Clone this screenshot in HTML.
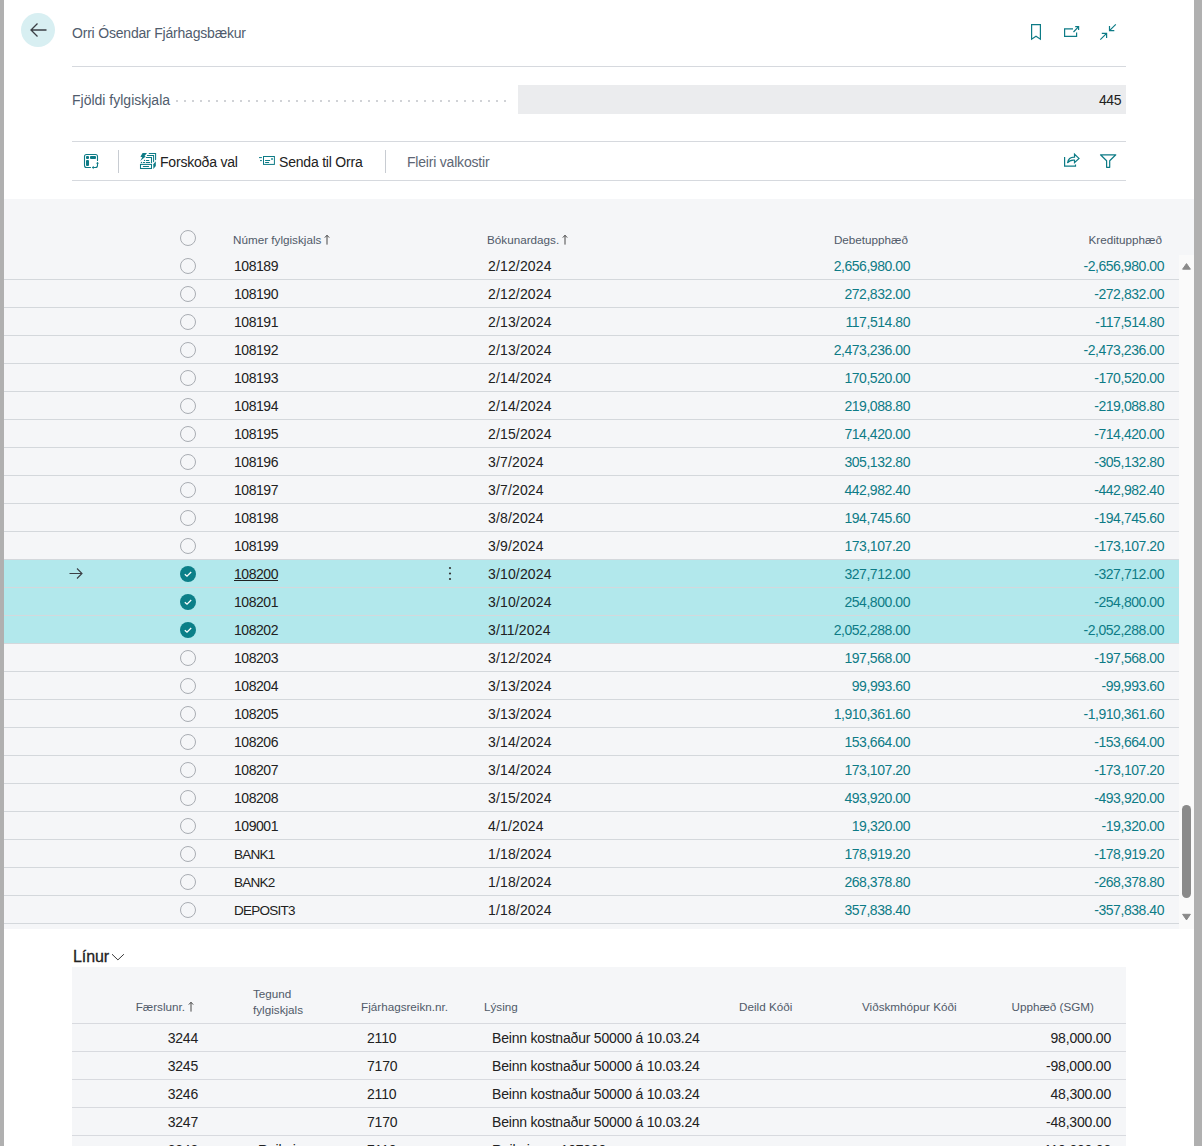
<!DOCTYPE html>
<html><head><meta charset="utf-8">
<style>
*{box-sizing:border-box;margin:0;padding:0}
html,body{width:1202px;height:1146px;overflow:hidden;background:#fff}
body{position:relative;font-family:"Liberation Sans",sans-serif;font-size:14px;letter-spacing:-0.2px;color:#212121}
.num{letter-spacing:-0.45px}
.date{letter-spacing:0.15px}
.code{font-size:13.5px;letter-spacing:-0.75px}
.abs{position:absolute}
.strip{position:absolute;top:0;bottom:0;background:#b0b0b0}
.t{position:absolute;white-space:nowrap;line-height:16px}
.hline{position:absolute;height:1px;background:#d6d9de}
.teal{color:#0d7b86}
.hdr{font-size:11.7px;letter-spacing:0;color:#505a69}
.grid{position:absolute;left:4px;top:199px;width:1190px;height:730px;background:#f5f6f8}
.row{position:absolute;left:0;width:1175px;height:28px}
.row .line{position:absolute;left:0;right:0;bottom:0;height:1px;background:#d8dadf}
.rad{position:absolute;width:16px;height:16px;border-radius:50%;border:1.3px solid #a9adb3}
.chk{position:absolute;width:16px;height:16px;border-radius:50%;background:#0b7f88}
.arr{display:inline-block;width:8px;height:11px;margin-left:2px;vertical-align:-1px}
</style></head><body>
<div class="strip" style="left:0;width:4px"></div>
<div class="strip" style="left:1194px;width:8px"></div>

<!-- header -->
<div class="abs" style="left:21px;top:13px;width:34px;height:34px;border-radius:50%;background:#d8eff2"></div>
<svg class="abs" style="left:21px;top:13px" width="34" height="34" viewBox="0 0 34 34"><path d="M10 17H25.5M16.5 10.5L10 17L16.5 23.5" fill="none" stroke="#3b3f45" stroke-width="1.3"/></svg>
<div class="t" style="left:72px;top:25px;color:#505c6d">Orri Ósendar Fjárhagsbækur</div>

<div class="hline" style="left:72px;top:66px;width:1054px"></div>
<div class="t" style="left:72px;top:92px;color:#505c6d;letter-spacing:0">Fjöldi fylgiskjala</div>
<div class="abs" style="left:176px;top:100px;width:330px;height:2px;background:repeating-linear-gradient(to right,#d0d2d6 0 2px,transparent 2px 8px)"></div>
<div class="abs" style="left:518px;top:85px;width:608px;height:29px;background:#ebecee"></div>
<div class="t num" style="left:1000px;width:121px;text-align:right;top:92px;color:#212121">445</div>

<div class="hline" style="left:72px;top:141px;width:1054px"></div>
<div class="hline" style="left:72px;top:180px;width:1054px"></div>


<!-- top right icons -->
<svg class="abs" style="left:1024px;top:16px" width="100" height="30" viewBox="1024 16 100 30">
<g fill="none" stroke="#0d7b86" stroke-width="1.2">
<path d="M1031.6 24.6H1040.4V39.2L1036 36.2L1031.6 39.2Z"/>
<path d="M1073 28.9H1064.6V36.3H1076.6V32.5"/>
<path d="M1073.5 32L1078.6 26.6M1075.2 26.6H1078.6V30"/>
<path d="M1100.3 39.6L1106.6 33.3M1101.8 33.3H1106.6V38.1"/>
<path d="M1115.8 24.4L1109.5 30.7M1109.5 25.9V30.7H1114.3"/>
</g></svg>

<!-- action bar -->
<svg class="abs" style="left:80px;top:148px" width="24" height="26" viewBox="80 148 24 26">
<g fill="none" stroke="#0d7b86" stroke-width="1.1" stroke-linecap="round">
<path d="M90.5 167.5H86.5Q84.5 167.5 84.5 165.5V156.5Q84.5 154.5 86.5 154.5H95.5Q97.5 154.5 97.5 156.5V160.5"/>
<path d="M97.5 163V165.5Q97.5 167.5 95.5 167.5H93"/>
</g>
<g fill="#0d7b86"><rect x="86" y="156" width="3" height="2.9" rx="0.9"/><rect x="90" y="156" width="6" height="2.9" rx="0.9"/><rect x="86" y="160" width="3" height="6" rx="0.9"/>
<path d="M95.9 163.6L97.5 161.9L99.1 163.6Z"/><path d="M93.6 165.8L91.9 167.5L93.6 169.2Z"/></g>
</svg>
<div class="abs" style="left:118px;top:150px;width:1px;height:23px;background:#c8ccd2"></div>
<svg class="abs" style="left:138px;top:151px" width="20" height="20" viewBox="138 151 20 20">
<g fill="none" stroke="#0d7b86" stroke-width="1.05" stroke-linecap="round">
<path d="M149.2 153.5H155.6V159.6"/><path d="M147.4 155.5H153.6V161.6"/><path d="M146.3 157.5H151.5V162.6"/>
<rect x="140.5" y="164.4" width="11" height="4.1"/>
<path d="M143.3 166.5H148.6M146.3 160.4H148.8M143.3 162.5H144.6M146.3 162.5H149.7"/>
</g>
<g fill="#0d7b86"><circle cx="144.5" cy="160.4" r="0.65"/><circle cx="141.4" cy="162.5" r="0.65"/>
<path d="M142.6 152.9L147 153.1L144.5 155.9L145.7 156.6L140.2 160.9L142.3 157.3L140.4 156.8Z"/>
<path d="M153.3 164.2L155.8 161.3V165.9L153.3 168.9Z"/></g>
</svg>
<div class="t" style="left:160px;top:154px">Forskoða val</div>
<svg class="abs" style="left:256px;top:152px" width="22" height="16" viewBox="256 152 22 16">
<g fill="none" stroke="#0d7b86" stroke-width="1" stroke-linecap="round"><rect x="263.5" y="156.5" width="10.9" height="7.9"/><path d="M265.5 160.5H269.7M265.5 162.5H268.7M259.4 157.6H261.5M260.4 160.6H261.5"/></g>
<rect x="271.2" y="158.2" width="1.6" height="1.6" fill="#0d7b86"/>
</svg>
<div class="t" style="left:279px;top:154px">Senda til Orra</div>
<div class="abs" style="left:385px;top:150px;width:1px;height:23px;background:#c8ccd2"></div>
<div class="t" style="left:407px;top:154px;color:#5d6674">Fleiri valkostir</div>
<svg class="abs" style="left:1060px;top:150px" width="64" height="22" viewBox="1060 150 64 22">
<g fill="none" stroke="#0d7b86" stroke-width="1.2">
<path d="M1064.6 157V166.2H1075.5V164.4"/>
<path d="M1067.5 163Q1068.5 157 1074.5 157.2V154.2L1079 158.4L1074.5 162.6V160.2Q1070 159.6 1067.5 163Z"/>
<path d="M1100.5 154.8H1115.8L1109.7 160.8V167.3H1106.6V160.8Z" stroke-linejoin="round"/>
</g></svg>

<div id="grid" class="grid"></div>


<div class="rad" style="left:180px;top:230px"></div>
<div class="t hdr" style="left:233px;top:232px">Númer fylgiskjals<svg class="arr" viewBox="0 0 8 11"><path d="M4 1.2V10.6M1.8 3.6L4 1.3L6.2 3.6" fill="none" stroke="#484848" stroke-width="1"/></svg></div>
<div class="t hdr" style="left:487px;top:232px">Bókunardags.<svg class="arr" viewBox="0 0 8 11"><path d="M4 1.2V10.6M1.8 3.6L4 1.3L6.2 3.6" fill="none" stroke="#484848" stroke-width="1"/></svg></div>
<div class="t hdr" style="left:700px;width:208px;text-align:right;top:232px">Debetupphæð</div>
<div class="t hdr" style="left:950px;width:212px;text-align:right;top:232px">Kreditupphæð</div>
<div class="abs" style="left:4px;top:279px;width:1175px;height:1px;background:#d4d8dc"></div>
<div class="rad" style="left:180px;top:258px"></div>
<div class="t num" style="left:234px;top:258px"><span>108189</span></div>
<div class="t date" style="left:488px;top:258px">2/12/2024</div>
<div class="t teal num" style="left:700px;width:210px;text-align:right;top:258px">2,656,980.00</div>
<div class="t teal num" style="left:950px;width:214px;text-align:right;top:258px">-2,656,980.00</div>
<div class="abs" style="left:4px;top:307px;width:1175px;height:1px;background:#d4d8dc"></div>
<div class="rad" style="left:180px;top:286px"></div>
<div class="t num" style="left:234px;top:286px"><span>108190</span></div>
<div class="t date" style="left:488px;top:286px">2/12/2024</div>
<div class="t teal num" style="left:700px;width:210px;text-align:right;top:286px">272,832.00</div>
<div class="t teal num" style="left:950px;width:214px;text-align:right;top:286px">-272,832.00</div>
<div class="abs" style="left:4px;top:335px;width:1175px;height:1px;background:#d4d8dc"></div>
<div class="rad" style="left:180px;top:314px"></div>
<div class="t num" style="left:234px;top:314px"><span>108191</span></div>
<div class="t date" style="left:488px;top:314px">2/13/2024</div>
<div class="t teal num" style="left:700px;width:210px;text-align:right;top:314px">117,514.80</div>
<div class="t teal num" style="left:950px;width:214px;text-align:right;top:314px">-117,514.80</div>
<div class="abs" style="left:4px;top:363px;width:1175px;height:1px;background:#d4d8dc"></div>
<div class="rad" style="left:180px;top:342px"></div>
<div class="t num" style="left:234px;top:342px"><span>108192</span></div>
<div class="t date" style="left:488px;top:342px">2/13/2024</div>
<div class="t teal num" style="left:700px;width:210px;text-align:right;top:342px">2,473,236.00</div>
<div class="t teal num" style="left:950px;width:214px;text-align:right;top:342px">-2,473,236.00</div>
<div class="abs" style="left:4px;top:391px;width:1175px;height:1px;background:#d4d8dc"></div>
<div class="rad" style="left:180px;top:370px"></div>
<div class="t num" style="left:234px;top:370px"><span>108193</span></div>
<div class="t date" style="left:488px;top:370px">2/14/2024</div>
<div class="t teal num" style="left:700px;width:210px;text-align:right;top:370px">170,520.00</div>
<div class="t teal num" style="left:950px;width:214px;text-align:right;top:370px">-170,520.00</div>
<div class="abs" style="left:4px;top:419px;width:1175px;height:1px;background:#d4d8dc"></div>
<div class="rad" style="left:180px;top:398px"></div>
<div class="t num" style="left:234px;top:398px"><span>108194</span></div>
<div class="t date" style="left:488px;top:398px">2/14/2024</div>
<div class="t teal num" style="left:700px;width:210px;text-align:right;top:398px">219,088.80</div>
<div class="t teal num" style="left:950px;width:214px;text-align:right;top:398px">-219,088.80</div>
<div class="abs" style="left:4px;top:447px;width:1175px;height:1px;background:#d4d8dc"></div>
<div class="rad" style="left:180px;top:426px"></div>
<div class="t num" style="left:234px;top:426px"><span>108195</span></div>
<div class="t date" style="left:488px;top:426px">2/15/2024</div>
<div class="t teal num" style="left:700px;width:210px;text-align:right;top:426px">714,420.00</div>
<div class="t teal num" style="left:950px;width:214px;text-align:right;top:426px">-714,420.00</div>
<div class="abs" style="left:4px;top:475px;width:1175px;height:1px;background:#d4d8dc"></div>
<div class="rad" style="left:180px;top:454px"></div>
<div class="t num" style="left:234px;top:454px"><span>108196</span></div>
<div class="t date" style="left:488px;top:454px">3/7/2024</div>
<div class="t teal num" style="left:700px;width:210px;text-align:right;top:454px">305,132.80</div>
<div class="t teal num" style="left:950px;width:214px;text-align:right;top:454px">-305,132.80</div>
<div class="abs" style="left:4px;top:503px;width:1175px;height:1px;background:#d4d8dc"></div>
<div class="rad" style="left:180px;top:482px"></div>
<div class="t num" style="left:234px;top:482px"><span>108197</span></div>
<div class="t date" style="left:488px;top:482px">3/7/2024</div>
<div class="t teal num" style="left:700px;width:210px;text-align:right;top:482px">442,982.40</div>
<div class="t teal num" style="left:950px;width:214px;text-align:right;top:482px">-442,982.40</div>
<div class="abs" style="left:4px;top:531px;width:1175px;height:1px;background:#d4d8dc"></div>
<div class="rad" style="left:180px;top:510px"></div>
<div class="t num" style="left:234px;top:510px"><span>108198</span></div>
<div class="t date" style="left:488px;top:510px">3/8/2024</div>
<div class="t teal num" style="left:700px;width:210px;text-align:right;top:510px">194,745.60</div>
<div class="t teal num" style="left:950px;width:214px;text-align:right;top:510px">-194,745.60</div>
<div class="abs" style="left:4px;top:559px;width:1175px;height:1px;background:#d4d8dc"></div>
<div class="rad" style="left:180px;top:538px"></div>
<div class="t num" style="left:234px;top:538px"><span>108199</span></div>
<div class="t date" style="left:488px;top:538px">3/9/2024</div>
<div class="t teal num" style="left:700px;width:210px;text-align:right;top:538px">173,107.20</div>
<div class="t teal num" style="left:950px;width:214px;text-align:right;top:538px">-173,107.20</div>
<div class="abs" style="left:4px;top:560px;width:1175px;height:28px;background:#b2e8ec"></div>
<div class="abs" style="left:4px;top:587px;width:1175px;height:1px;background:#d4d8dc"></div>
<svg class="abs" style="left:180px;top:566px" width="16" height="16" viewBox="0 0 16 16"><circle cx="8" cy="8" r="8" fill="#0b7f88"/><path d="M4.8 8.2L7 10.2L11.2 6" fill="none" stroke="#fff" stroke-width="1.3"/></svg>
<div class="t num" style="left:234px;top:566px"><span style="text-decoration:underline">108200</span></div>
<div class="t date" style="left:488px;top:566px">3/10/2024</div>
<div class="t teal num" style="left:700px;width:210px;text-align:right;top:566px">327,712.00</div>
<div class="t teal num" style="left:950px;width:214px;text-align:right;top:566px">-327,712.00</div>
<svg class="abs" style="left:68px;top:566px" width="16" height="16" viewBox="0 0 16 16"><path d="M1.5 7.5H14M9 2.5L14 7.5L9 12.5" fill="none" stroke="#3b3f45" stroke-width="1.1"/></svg>
<svg class="abs" style="left:447px;top:565px" width="6" height="16" viewBox="0 0 6 16"><circle cx="3" cy="3" r="1.1" fill="#333"/><circle cx="3" cy="8.5" r="1.1" fill="#333"/><circle cx="3" cy="14" r="1.1" fill="#333"/></svg>
<div class="abs" style="left:4px;top:588px;width:1175px;height:28px;background:#b2e8ec"></div>
<div class="abs" style="left:4px;top:615px;width:1175px;height:1px;background:#d4d8dc"></div>
<svg class="abs" style="left:180px;top:594px" width="16" height="16" viewBox="0 0 16 16"><circle cx="8" cy="8" r="8" fill="#0b7f88"/><path d="M4.8 8.2L7 10.2L11.2 6" fill="none" stroke="#fff" stroke-width="1.3"/></svg>
<div class="t num" style="left:234px;top:594px"><span>108201</span></div>
<div class="t date" style="left:488px;top:594px">3/10/2024</div>
<div class="t teal num" style="left:700px;width:210px;text-align:right;top:594px">254,800.00</div>
<div class="t teal num" style="left:950px;width:214px;text-align:right;top:594px">-254,800.00</div>
<div class="abs" style="left:4px;top:616px;width:1175px;height:28px;background:#b2e8ec"></div>
<div class="abs" style="left:4px;top:643px;width:1175px;height:1px;background:#d4d8dc"></div>
<svg class="abs" style="left:180px;top:622px" width="16" height="16" viewBox="0 0 16 16"><circle cx="8" cy="8" r="8" fill="#0b7f88"/><path d="M4.8 8.2L7 10.2L11.2 6" fill="none" stroke="#fff" stroke-width="1.3"/></svg>
<div class="t num" style="left:234px;top:622px"><span>108202</span></div>
<div class="t date" style="left:488px;top:622px">3/11/2024</div>
<div class="t teal num" style="left:700px;width:210px;text-align:right;top:622px">2,052,288.00</div>
<div class="t teal num" style="left:950px;width:214px;text-align:right;top:622px">-2,052,288.00</div>
<div class="abs" style="left:4px;top:671px;width:1175px;height:1px;background:#d4d8dc"></div>
<div class="rad" style="left:180px;top:650px"></div>
<div class="t num" style="left:234px;top:650px"><span>108203</span></div>
<div class="t date" style="left:488px;top:650px">3/12/2024</div>
<div class="t teal num" style="left:700px;width:210px;text-align:right;top:650px">197,568.00</div>
<div class="t teal num" style="left:950px;width:214px;text-align:right;top:650px">-197,568.00</div>
<div class="abs" style="left:4px;top:699px;width:1175px;height:1px;background:#d4d8dc"></div>
<div class="rad" style="left:180px;top:678px"></div>
<div class="t num" style="left:234px;top:678px"><span>108204</span></div>
<div class="t date" style="left:488px;top:678px">3/13/2024</div>
<div class="t teal num" style="left:700px;width:210px;text-align:right;top:678px">99,993.60</div>
<div class="t teal num" style="left:950px;width:214px;text-align:right;top:678px">-99,993.60</div>
<div class="abs" style="left:4px;top:727px;width:1175px;height:1px;background:#d4d8dc"></div>
<div class="rad" style="left:180px;top:706px"></div>
<div class="t num" style="left:234px;top:706px"><span>108205</span></div>
<div class="t date" style="left:488px;top:706px">3/13/2024</div>
<div class="t teal num" style="left:700px;width:210px;text-align:right;top:706px">1,910,361.60</div>
<div class="t teal num" style="left:950px;width:214px;text-align:right;top:706px">-1,910,361.60</div>
<div class="abs" style="left:4px;top:755px;width:1175px;height:1px;background:#d4d8dc"></div>
<div class="rad" style="left:180px;top:734px"></div>
<div class="t num" style="left:234px;top:734px"><span>108206</span></div>
<div class="t date" style="left:488px;top:734px">3/14/2024</div>
<div class="t teal num" style="left:700px;width:210px;text-align:right;top:734px">153,664.00</div>
<div class="t teal num" style="left:950px;width:214px;text-align:right;top:734px">-153,664.00</div>
<div class="abs" style="left:4px;top:783px;width:1175px;height:1px;background:#d4d8dc"></div>
<div class="rad" style="left:180px;top:762px"></div>
<div class="t num" style="left:234px;top:762px"><span>108207</span></div>
<div class="t date" style="left:488px;top:762px">3/14/2024</div>
<div class="t teal num" style="left:700px;width:210px;text-align:right;top:762px">173,107.20</div>
<div class="t teal num" style="left:950px;width:214px;text-align:right;top:762px">-173,107.20</div>
<div class="abs" style="left:4px;top:811px;width:1175px;height:1px;background:#d4d8dc"></div>
<div class="rad" style="left:180px;top:790px"></div>
<div class="t num" style="left:234px;top:790px"><span>108208</span></div>
<div class="t date" style="left:488px;top:790px">3/15/2024</div>
<div class="t teal num" style="left:700px;width:210px;text-align:right;top:790px">493,920.00</div>
<div class="t teal num" style="left:950px;width:214px;text-align:right;top:790px">-493,920.00</div>
<div class="abs" style="left:4px;top:839px;width:1175px;height:1px;background:#d4d8dc"></div>
<div class="rad" style="left:180px;top:818px"></div>
<div class="t num" style="left:234px;top:818px"><span>109001</span></div>
<div class="t date" style="left:488px;top:818px">4/1/2024</div>
<div class="t teal num" style="left:700px;width:210px;text-align:right;top:818px">19,320.00</div>
<div class="t teal num" style="left:950px;width:214px;text-align:right;top:818px">-19,320.00</div>
<div class="abs" style="left:4px;top:867px;width:1175px;height:1px;background:#d4d8dc"></div>
<div class="rad" style="left:180px;top:846px"></div>
<div class="t code" style="left:234px;top:847px"><span>BANK1</span></div>
<div class="t date" style="left:488px;top:846px">1/18/2024</div>
<div class="t teal num" style="left:700px;width:210px;text-align:right;top:846px">178,919.20</div>
<div class="t teal num" style="left:950px;width:214px;text-align:right;top:846px">-178,919.20</div>
<div class="abs" style="left:4px;top:895px;width:1175px;height:1px;background:#d4d8dc"></div>
<div class="rad" style="left:180px;top:874px"></div>
<div class="t code" style="left:234px;top:875px"><span>BANK2</span></div>
<div class="t date" style="left:488px;top:874px">1/18/2024</div>
<div class="t teal num" style="left:700px;width:210px;text-align:right;top:874px">268,378.80</div>
<div class="t teal num" style="left:950px;width:214px;text-align:right;top:874px">-268,378.80</div>
<div class="abs" style="left:4px;top:923px;width:1175px;height:1px;background:#d4d8dc"></div>
<div class="rad" style="left:180px;top:902px"></div>
<div class="t code" style="left:234px;top:903px"><span>DEPOSIT3</span></div>
<div class="t date" style="left:488px;top:902px">1/18/2024</div>
<div class="t teal num" style="left:700px;width:210px;text-align:right;top:902px">357,838.40</div>
<div class="t teal num" style="left:950px;width:214px;text-align:right;top:902px">-357,838.40</div>
<div class="abs" style="left:1179px;top:255px;width:15px;height:674px;background:#fafafa"></div>
<svg class="abs" style="left:1179px;top:255px" width="15" height="674" viewBox="0 0 15 674"><path d="M3.6 14.2L7.5 8.6L11.4 14.2Z" fill="#8a8a8a" stroke="#8a8a8a" stroke-width="1" stroke-linejoin="round"/><rect x="3" y="550" width="9" height="93" rx="4.5" fill="#8a8a8a"/><path d="M3.6 659.3L7.5 664.9L11.4 659.3Z" fill="#8a8a8a" stroke="#8a8a8a" stroke-width="1" stroke-linejoin="round"/></svg>
<div class="t" style="left:73px;top:948px;font-size:16px;letter-spacing:-0.1px;-webkit-text-stroke:0.3px #222;color:#222;line-height:18px">Línur</div>
<svg class="abs" style="left:110px;top:950px" width="16" height="14" viewBox="0 0 16 14"><path d="M2 4.2L7.9 9.9L13.9 4.2" fill="none" stroke="#3a3a3a" stroke-width="1"/></svg>
<div class="abs" style="left:72px;top:967px;width:1054px;height:179px;background:#f5f6f8"></div>
<div class="t hdr" style="left:103px;width:92px;text-align:right;top:999px">Færslunr.<svg class="arr" viewBox="0 0 8 11"><path d="M4 1.2V10.6M1.8 3.6L4 1.3L6.2 3.6" fill="none" stroke="#484848" stroke-width="1"/></svg></div>
<div class="t hdr" style="left:253px;top:986px">Tegund</div>
<div class="t hdr" style="left:253px;top:1002px">fylgiskjals</div>
<div class="t hdr" style="left:361px;top:999px">Fjárhagsreikn.nr.</div>
<div class="t hdr" style="left:484px;top:999px">Lýsing</div>
<div class="t hdr" style="left:739px;top:999px">Deild Kóði</div>
<div class="t hdr" style="left:862px;top:999px">Viðskmhópur Kóði</div>
<div class="t hdr" style="left:900px;width:194px;text-align:right;top:999px">Upphæð (SGM)</div>
<div class="abs" style="left:72px;top:1023px;width:1054px;height:1px;background:#d8dadf"></div>
<div class="abs" style="left:72px;top:1051px;width:1054px;height:1px;background:#d8dadf"></div>
<div class="t" style="left:100px;width:98px;text-align:right;top:1030px">3244</div>
<div class="t" style="left:367px;top:1030px">2110</div>
<div class="t" style="left:492px;top:1030px">Beinn kostnaður 50000 á 10.03.24</div>
<div class="t" style="left:900px;width:211px;text-align:right;top:1030px">98,000.00</div>
<div class="abs" style="left:72px;top:1079px;width:1054px;height:1px;background:#d8dadf"></div>
<div class="t" style="left:100px;width:98px;text-align:right;top:1058px">3245</div>
<div class="t" style="left:367px;top:1058px">7170</div>
<div class="t" style="left:492px;top:1058px">Beinn kostnaður 50000 á 10.03.24</div>
<div class="t" style="left:900px;width:211px;text-align:right;top:1058px">-98,000.00</div>
<div class="abs" style="left:72px;top:1107px;width:1054px;height:1px;background:#d8dadf"></div>
<div class="t" style="left:100px;width:98px;text-align:right;top:1086px">3246</div>
<div class="t" style="left:367px;top:1086px">2110</div>
<div class="t" style="left:492px;top:1086px">Beinn kostnaður 50000 á 10.03.24</div>
<div class="t" style="left:900px;width:211px;text-align:right;top:1086px">48,300.00</div>
<div class="abs" style="left:72px;top:1135px;width:1054px;height:1px;background:#d8dadf"></div>
<div class="t" style="left:100px;width:98px;text-align:right;top:1114px">3247</div>
<div class="t" style="left:367px;top:1114px">7170</div>
<div class="t" style="left:492px;top:1114px">Beinn kostnaður 50000 á 10.03.24</div>
<div class="t" style="left:900px;width:211px;text-align:right;top:1114px">-48,300.00</div>
<div class="abs" style="left:72px;top:1163px;width:1054px;height:1px;background:#d8dadf"></div>
<div class="t" style="left:100px;width:98px;text-align:right;top:1142px">3248</div>
<div class="t" style="left:258px;top:1142px">Reikningur</div>
<div class="t" style="left:367px;top:1142px">7110</div>
<div class="t" style="left:492px;top:1142px">Reikningur 107890</div>
<div class="t" style="left:900px;width:211px;text-align:right;top:1142px">110,000.00</div>
</body></html>
